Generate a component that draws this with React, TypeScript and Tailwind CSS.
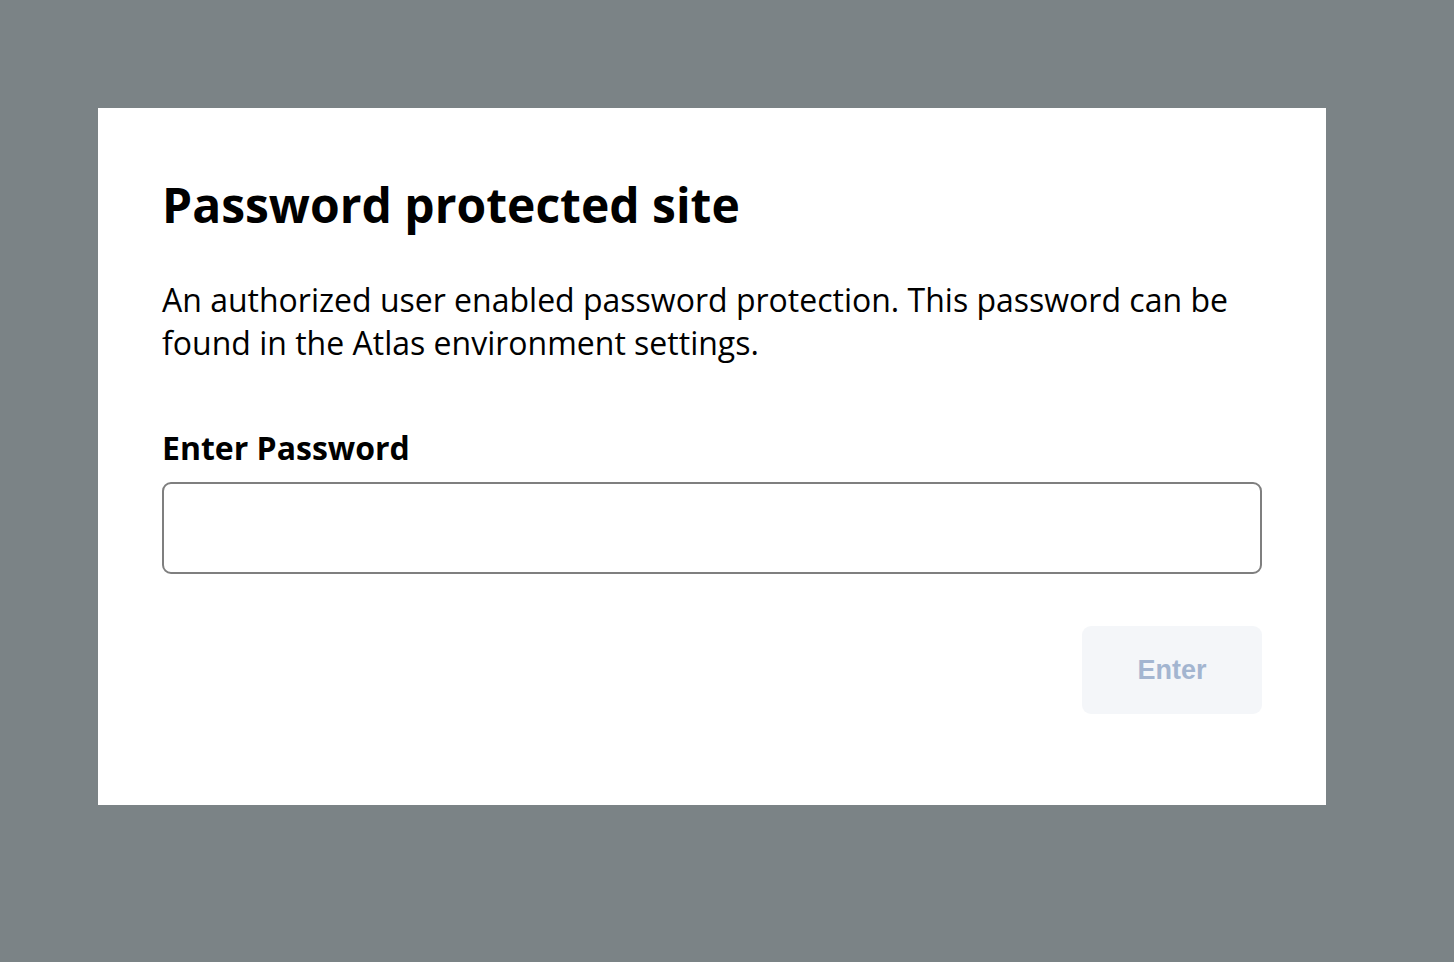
export default function App() {
  return (
    <div className="min-h-screen w-full bg-[#7b8386] pl-[98px] pt-[108px]" style={{ height: 962 }}>
      <div className="w-[1228px] bg-white px-[64px] pt-[67px] pb-[91px] font-['Open_Sans','Noto_Sans',sans-serif] text-black">
        <h1 className="text-[48px] leading-[60px] font-bold">Password protected site</h1>
        <p className="mt-[43px] text-[32px] leading-[43px]">
          An authorized user enabled password protection. This password can be found in the Atlas environment settings.
        </p>
        <label className="mt-[62px] block text-[32px] leading-[43px] font-bold">Enter Password</label>
        <input
          type="password"
          className="mt-[13px] block h-[92px] w-full rounded-[9px] border-2 border-[#7f7f7f] bg-white px-4 text-[28px] outline-none"
        />
        <div className="mt-[52px] flex justify-end">
          <button className="h-[88px] w-[180px] rounded-[9px] bg-[#f4f6f9] font-['Liberation_Sans',Arial,sans-serif] text-[27px] font-bold text-[#a3b5d0]">
            Enter
          </button>
        </div>
      </div>
    </div>
  );
}
